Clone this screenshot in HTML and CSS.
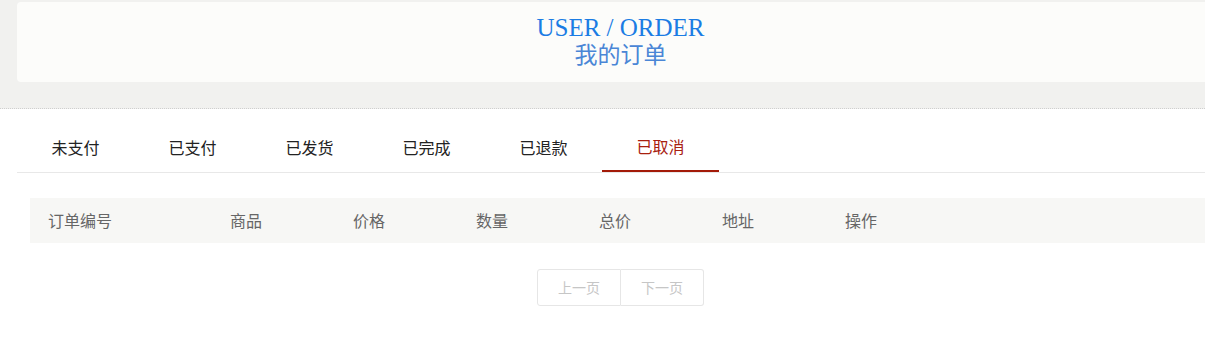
FILE: index.html
```html
<!DOCTYPE html>
<html lang="zh-CN">
<head>
<meta charset="utf-8">
<title>我的订单</title>
<link rel="stylesheet" href="styles.css">
</head>
<body>
<header class="top">
  <div class="wrap">
    <div class="card">
      <div class="title-en">USER / ORDER</div>
      <div class="title-cn">我的订单</div>
    </div>
  </div>
</header>
<main class="wrap">
  <nav class="tabs">
    <a class="tab">未支付</a>
    <a class="tab">已支付</a>
    <a class="tab">已发货</a>
    <a class="tab">已完成</a>
    <a class="tab">已退款</a>
    <a class="tab active">已取消</a>
  </nav>
  <div class="thead">
    <span>订单编号</span>
    <span>商品</span>
    <span>价格</span>
    <span>数量</span>
    <span>总价</span>
    <span>地址</span>
    <span>操作</span>
  </div>
  <div class="pager">
    <span class="btn">上一页</span>
    <span class="btn">下一页</span>
  </div>
</main>
</body>
</html>
```
FILE: styles.css
```css
html, body {
  margin: 0;
  padding: 0;
  background: #ffffff;
  overflow: hidden;
  font-family: "Noto Sans CJK SC", "Liberation Sans", sans-serif;
}
.wrap {
  margin-left: 17px;
  width: 1207px;
}
.top {
  background: #f1f1ef;
  height: 109px;
  padding-top: 2px;
  box-sizing: border-box;
  border-bottom: 1px dotted #cfcfcf;
  overflow: hidden;
}
.card {
  background: #fcfcfa;
  border-radius: 4px;
  height: 80px;
  box-sizing: border-box;
  padding-top: 12px;
  text-align: center;
}
.title-en {
  font-family: "Liberation Serif", "Noto Sans CJK SC", serif;
  font-size: 25px;
  line-height: 28px;
  color: #1b7ce4;
}
.title-cn {
  font-family: "Liberation Serif", "Noto Sans CJK SC", serif;
  font-size: 23px;
  line-height: 28px;
  color: #4a86d6;
}
.tabs {
  display: flex;
  margin-top: 13px;
  border-bottom: 1px solid #e8e8e8;
}
.tab {
  width: 117px;
  height: 50px;
  line-height: 50px;
  box-sizing: border-box;
  text-align: center;
  font-size: 16px;
  color: #222222;
}
.tab.active {
  color: #a8200f;
  border-bottom: 2px solid #a31a08;
  line-height: 48px;
}
.thead {
  display: grid;
  grid-template-columns: 182px repeat(6, 123px);
  margin-top: 25px;
  margin-left: 13px;
  padding-left: 18px;
  height: 45px;
  line-height: 45px;
  background: #f7f7f5;
  font-size: 16px;
  color: #666666;
}
.pager {
  display: flex;
  justify-content: center;
  margin-top: 26px;
}
.btn {
  height: 37px;
  line-height: 35px;
  box-sizing: border-box;
  padding: 0 20px;
  font-size: 14px;
  color: #c6c6c6;
  border: 1px solid #e6e6e6;
  background: #fff;
}
.btn:first-child {
  border-radius: 3px 0 0 3px;
}
.btn:last-child {
  border-left: none;
  border-radius: 0 3px 3px 0;
}
```
